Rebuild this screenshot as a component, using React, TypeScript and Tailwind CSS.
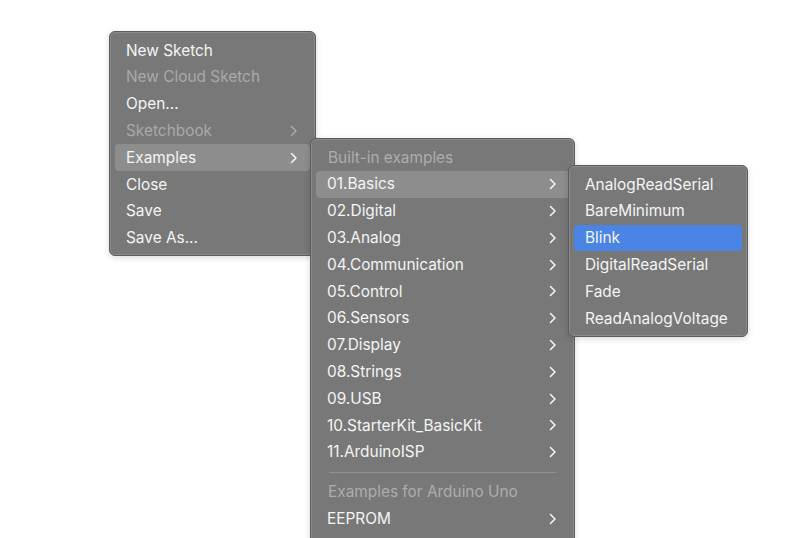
import React from "react";

type Item =
  | { kind: "item"; label: string; disabled?: boolean; sub?: boolean; active?: "gray" | "blue" }
  | { kind: "header"; label: string }
  | { kind: "sep" };

const fileMenu: Item[] = [
  { kind: "item", label: "New Sketch" },
  { kind: "item", label: "New Cloud Sketch", disabled: true },
  { kind: "item", label: "Open..." },
  { kind: "item", label: "Sketchbook", disabled: true, sub: true },
  { kind: "item", label: "Examples", sub: true, active: "gray" },
  { kind: "item", label: "Close" },
  { kind: "item", label: "Save" },
  { kind: "item", label: "Save As..." },
];

// list goes on below the window edge
const examplesMenu: Item[] = [
  { kind: "header", label: "Built-in examples" },
  { kind: "item", label: "01.Basics", sub: true, active: "gray" },
  { kind: "item", label: "02.Digital", sub: true },
  { kind: "item", label: "03.Analog", sub: true },
  { kind: "item", label: "04.Communication", sub: true },
  { kind: "item", label: "05.Control", sub: true },
  { kind: "item", label: "06.Sensors", sub: true },
  { kind: "item", label: "07.Display", sub: true },
  { kind: "item", label: "08.Strings", sub: true },
  { kind: "item", label: "09.USB", sub: true },
  { kind: "item", label: "10.StarterKit_BasicKit", sub: true },
  { kind: "item", label: "11.ArduinoISP", sub: true },
  { kind: "sep" },
  { kind: "header", label: "Examples for Arduino Uno" },
  { kind: "item", label: "EEPROM", sub: true },
];

const basicsMenu: Item[] = [
  { kind: "item", label: "AnalogReadSerial" },
  { kind: "item", label: "BareMinimum" },
  { kind: "item", label: "Blink", active: "blue" },
  { kind: "item", label: "DigitalReadSerial" },
  { kind: "item", label: "Fade" },
  { kind: "item", label: "ReadAnalogVoltage" },
];

function Chevron({ dim }: { dim?: boolean }) {
  return (
    <svg width="8" height="12" viewBox="0 0 8 12" className={dim ? "text-[#a9a9a9]" : "text-[#f2f2f2]"}>
      <polyline points="1.5,1.5 6,6 1.5,10.5" fill="none" stroke="currentColor" strokeWidth="1.6" strokeLinecap="round" strokeLinejoin="round" />
    </svg>
  );
}

function Menu({ items, extra }: { items: Item[]; extra?: boolean }) {
  return (
    <div className={`flex flex-col pt-[5px] ${extra ? "pb-[40px]" : "pb-[4px]"}`}>
      {items.map((it, i) => {
        if (it.kind === "sep") {
          return (
            <div key={i} className="h-[13px] flex items-center px-[18px]">
              <div className="h-px w-full bg-[#919191]" />
            </div>
          );
        }
        if (it.kind === "header") {
          return (
            <div key={i} className="h-[26.8px] flex items-center px-[17px] text-[#adadad]">
              {it.label}
            </div>
          );
        }
        const bg =
          it.active === "gray" ? "bg-[#8d8d8d]" : it.active === "blue" ? "bg-[#4a84e4]" : "";
        return (
          <div key={i} className="h-[26.8px] px-[5px] flex">
            <div className={`flex-1 flex items-center justify-between pl-[11px] pr-[12px] rounded-[4px] ${bg}`}>
              <span className={it.disabled ? "text-[#a9a9a9]" : "text-[#f4f4f4]"}>{it.label}</span>
              {it.sub && <Chevron dim={it.disabled} />}
            </div>
          </div>
        );
      })}
    </div>
  );
}

export default function App() {
  return (
    <div
      className="relative w-[800px] h-[538px] overflow-hidden bg-white text-[15.4px] leading-none"
      style={{ fontFamily: "Inter, 'Liberation Sans', sans-serif" }}
    >
      <div className="absolute left-[109px] top-[31px] w-[207px] rounded-[6px] bg-[#787878] border border-[#5c5c5c] shadow-[inset_0_0_0_1px_#8a8a8a,0_2px_6px_rgba(0,0,0,0.15)]">
        <Menu items={fileMenu} />
      </div>
      <div className="absolute left-[310px] top-[138px] w-[265px] rounded-[6px] bg-[#787878] border border-[#5c5c5c] shadow-[inset_0_0_0_1px_#8a8a8a,0_2px_6px_rgba(0,0,0,0.15)]">
        <Menu items={examplesMenu} extra />
      </div>
      <div className="absolute left-[568px] top-[165px] w-[180px] rounded-[6px] bg-[#787878] border border-[#5c5c5c] shadow-[inset_0_0_0_1px_#8a8a8a,0_2px_6px_rgba(0,0,0,0.15)]">
        <Menu items={basicsMenu} />
      </div>
    </div>
  );
}
